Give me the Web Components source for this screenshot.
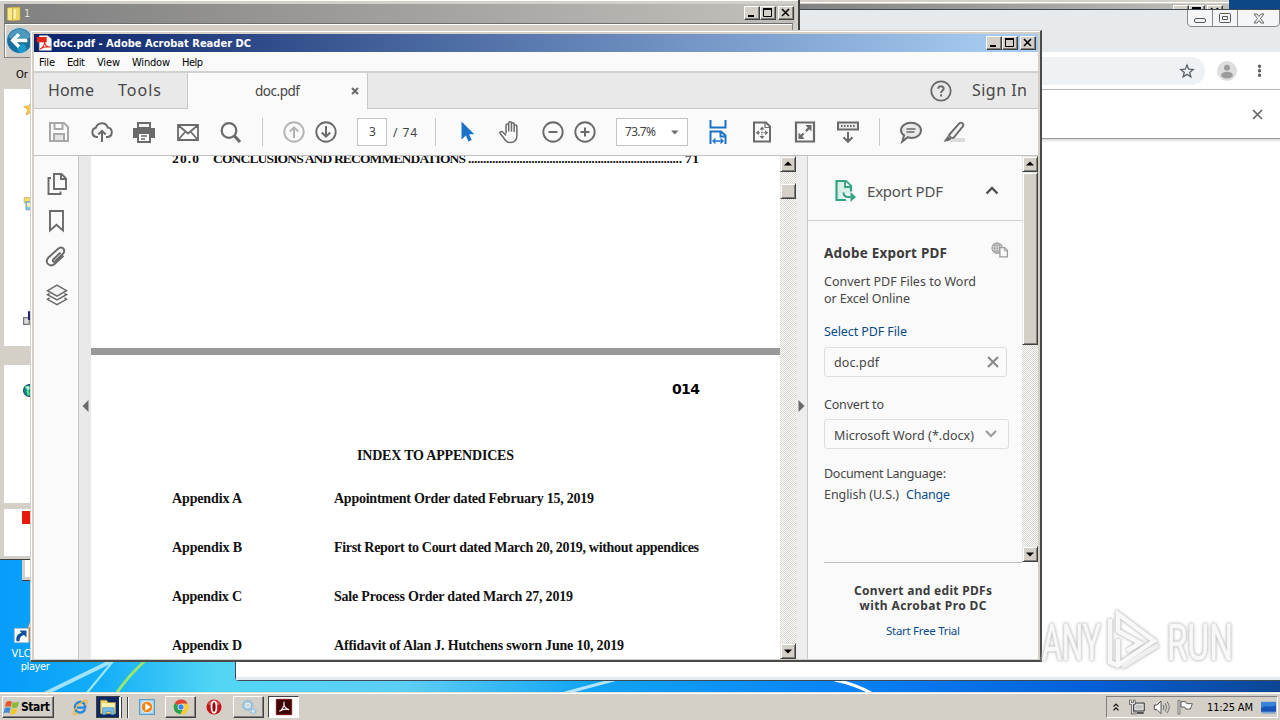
<!DOCTYPE html>
<html lang="en">
<head>
<meta charset="UTF-8">
<title>doc.pdf - Adobe Acrobat Reader DC</title>
<style>
  body {
    margin: 0;
    overflow: hidden;
    font-family: "Noto Sans", "Open Sans", sans-serif;
  }
</style>
</head>
<body>
<desktop-screen></desktop-screen>

<script>
const ICONS = {
  save: `<path d="M3 3h14l4 4v14H3z M7.500 3v6h8V3 M7 21v-7h10v7" fill="none" stroke="#a8a8a8" stroke-width="2"/><path d="M8 15h8v5H8z" fill="#e4e4e4"/>`,
  cloud: `<path d="M8 17H6.500a4.700 4.700 0 0 1-.6-9.200A6.200 6.200 0 0 1 17.800 7.500 4.800 4.800 0 0 1 17.500 17H16 M12 22V11 M8.300 14.500L12 10.800l3.700 3.700" fill="none" stroke="#6a6a6a" stroke-width="2"/>`,
  print: `<path d="M5 2h14v6H5z" fill="#6a6a6a"/><path d="M7 4h10v3H7z" fill="#f4f4f4"/><path d="M1 8h22v10H1z" fill="#6a6a6a"/><path d="M6 13h12v9H6z" fill="#fafafa" stroke="#6a6a6a" stroke-width="2"/><path d="M9 16h6M9 19h4" stroke="#6a6a6a" stroke-width="1.300"/>`,
  mail: `<path d="M2 5h20v15H2z M2.500 5.500L12 13.500l9.500-8 M2.500 19.500l7-8 M21.500 19.500l-7-8" fill="none" stroke="#6a6a6a" stroke-width="1.800"/>`,
  search: `<circle cx="10" cy="10.500" r="7.300" fill="none" stroke="#6a6a6a" stroke-width="2.200"/><path d="M15.500 16l5.500 6" stroke="#6a6a6a" stroke-width="3.200"/>`,
  up: `<circle cx="12" cy="12" r="9.700" fill="none" stroke="#b4b4b4" stroke-width="1.900"/><path d="M12 18V7.500M7.800 11.500L12 7.300l4.200 4.200" fill="none" stroke="#b4b4b4" stroke-width="2"/>`,
  down: `<circle cx="12" cy="12" r="9.700" fill="none" stroke="#6a6a6a" stroke-width="1.900"/><path d="M12 6v10.500M7.800 12.500l4.200 4.200 4.200-4.200" fill="none" stroke="#6a6a6a" stroke-width="2"/>`,
  cursor: `<path d="M6.500 1.500v18l4.300-4 2.700 6 3.200-1.400-2.600-5.800h5.200z" fill="#1a73c8"/>`,
  hand: `<path d="M8 13.500V5.500c0-2 2.700-2 2.700 0V11V3.300c0-2 2.800-2 2.800 0V11V4.300c0-2 2.700-2 2.700 0v7.200V6.500c0-2 2.700-2 2.700 0v8.700c0 5-2.400 7.300-6.400 7.300-3.500 0-5-1.500-6.500-4.200L2 13.200c-.6-1.400 1.300-2.400 2.700-1.200L8 15.500" fill="none" stroke="#6a6a6a" stroke-width="1.500" stroke-linejoin="round"/>`,
  minus: `<circle cx="12" cy="12" r="9.700" fill="none" stroke="#6a6a6a" stroke-width="1.900"/><path d="M7.500 12h9" stroke="#6a6a6a" stroke-width="2"/>`,
  plus: `<circle cx="12" cy="12" r="9.700" fill="none" stroke="#6a6a6a" stroke-width="1.900"/><path d="M7.500 12h9M12 7.500v9" stroke="#6a6a6a" stroke-width="2"/>`,
  fitwidth: `<path d="M4.500 0v7.500h15V0" fill="none" stroke="#1a73c8" stroke-width="2"/><path d="M4.500 24V11.500H15l4.500 4V24M14.500 11.500v5h5" fill="none" stroke="#1a73c8" stroke-width="2"/><path d="M7.500 21h9M9.500 18.500L7 21l2.500 2.500M14.500 18.500L17 21l-2.500 2.500" fill="none" stroke="#1a73c8" stroke-width="1.300"/>`,
  fitpage: `<path d="M4 2.500h12l4 4V21.500H4z" fill="none" stroke="#6a6a6a" stroke-width="2"/><path d="M15 3v4.500h5" fill="none" stroke="#6a6a6a" stroke-width="1.200"/><path d="M12 6.500l2.500 3h-5zM12 19l2.500-3h-5zM5.800 12.700l3-2.500v5zM18.200 12.700l-3-2.500v5z" fill="#6a6a6a"/><path d="M12 9v7.500M8.500 12.700h7" stroke="#6a6a6a" stroke-dasharray="1.500 1"/>`,
  fullscreen: `<path d="M3 2.500h18v19H3z" fill="none" stroke="#6a6a6a" stroke-width="2.200"/><path d="M18.500 5v6.500l-2.200-2.200-2.600 2.600-1.600-1.600 2.600-2.600L12.500 5zM5.500 19v-6.500l2.200 2.200 2-2 1.600 1.600-2 2 2.200 2.700z" fill="#6a6a6a"/>`,
  read: `<path d="M2 2.500h20v7H2z" fill="#e8e8e8" stroke="#6a6a6a" stroke-width="2"/><path d="M5 6h14" stroke="#6a6a6a" stroke-width="2" stroke-dasharray="1.600 1.400"/><path d="M12 12v9.500M7.500 17.300l4.500 4.500 4.500-4.500" fill="none" stroke="#6a6a6a" stroke-width="2"/>`,
  comment: `<path d="M12 2.800c5.800 0 10 3.200 10 7.600s-4.200 7.500-9 7.500c-2 0-3.200-.3-4.200-.7L3.300 21.500l1.800-6.200C3 13.900 2 12.500 2 10.400c0-4.400 4.200-7.600 10-7.600z" fill="#e8e8e8" stroke="#6a6a6a" stroke-width="2"/><path d="M7.500 9h9M7.500 12h8" stroke="#6a6a6a" stroke-width="1.300"/>`,
  pen: `<path d="M11 18h12v4H7z" fill="#dcdcdc"/><path d="M7 15L17.500 3.200c1.300-1.400 4.500.2 3.800 2.700L11.500 17.800c-2 .4-4-.8-4.500-2.800z" fill="#f4f4f4" stroke="#6a6a6a" stroke-width="1.900"/><path d="M6 15.500c.5 1.800 2.500 3.200 4.500 3L6.500 21l-5 .8z" fill="#6a6a6a"/>`,
  help: `<circle cx="12" cy="12" r="9.700" fill="none" stroke="#6a6a6a" stroke-width="1.800"/><path d="M9.300 9.800c0-3.300 5.400-3.200 5.400-.2 0 2-2.600 2-2.600 4.300M12.100 15.200v2.200" fill="none" stroke="#6a6a6a" stroke-width="2"/>`,
  pages: `<path d="M9 2h7.500l4.500 4.500V17H9z M16 2v5h5 M6 6H3.500v16h12v-2.500" fill="none" stroke="#6a6a6a" stroke-width="1.900"/>`,
  bookmark: `<path d="M5 2h13v19.500l-6.500-5.700L5 21.500z" fill="none" stroke="#6a6a6a" stroke-width="1.900"/>`,
  clip: `<path d="M16.500 8.500l-7 6.700c-1.800 1.600 0 3.400 1.600 2l8-7.700c3.400-3.600-1.400-8-5-4.800L4.500 13.500c-4.600 5 1.600 10.600 6.300 6.200l8.700-8" transform="translate(0 -1)" fill="none" stroke="#6a6a6a" stroke-width="1.900"/>`,
  layers: `<path d="M12 2.200l9.500 5.500L12 13.200 2.500 7.700z" fill="#f4f4f4" stroke="#6a6a6a" stroke-width="1.500"/><path d="M4.500 10.500l-2 1.200 9.500 5.200 9.500-5.200-2-1.200M4.500 15l-2 1.300 9.500 5.400 9.500-5.400-2-1.300" fill="none" stroke="#6a6a6a" stroke-width="1.500"/>`,
  export: `<path d="M13 21H3.500V2H13l5 5v5.500" fill="#d9efe6" stroke="#33a383" stroke-width="2.200"/><path d="M12 2v6h6" fill="#fff" stroke="#33a383" stroke-width="1.800"/><path d="M10.500 14c0 3 2 4 5 4h2" fill="none" stroke="#fafafa" stroke-width="5"/><path d="M10.500 13.500c0 3.500 2 4.500 5 4.500h2" fill="none" stroke="#33a383" stroke-width="2.200"/><path d="M17.500 13l5.500 5-5.500 5z" fill="#33a383"/>`,
  webfile: `<circle cx="9" cy="9" r="6.500" fill="#e4e4e4" stroke="#999" stroke-width="1.300"/><path d="M9 2.500v13M3 9h12M4 5.500h10M4 12.500h10" stroke="#999"/><ellipse cx="9" cy="9" rx="3.300" ry="6.500" fill="none" stroke="#999"/><path d="M12.500 8.500h6l3.500 3.500v8h-9.500z" fill="#fafafa" stroke="#999" stroke-width="1.600"/><path d="M18 9v3.500h4" fill="none" stroke="#999"/>`,
  pdf: `<path d="M5 1h13l5 5v17H5z" fill="#fff" stroke="#ccc"/><path d="M1 3h15v8H1z" fill="#e3261a"/><path d="M6 21c4-1 7-6 7-11 0 5 3 8 9 8-6-1-11 0-16 3z" fill="none" stroke="#e3261a" stroke-width="1.600"/>`,
  folder: `<path d="M2 3l8-1v20l-8-1z" fill="#f7e98a" stroke="#c5a940"/><path d="M10 2h11v19l-11 1z" fill="#edd763" stroke="#c5a940"/><path d="M13 5v14" stroke="#fff6bc" stroke-width="3"/>`,
  back: `<circle cx="12" cy="12" r="11.500" fill="#1a6f9e" stroke="#c3d4dc"/><path d="M2 9a10.500 10.500 0 0 1 20 0c-6 3-14 3-20 0z" fill="#5aa3c4" opacity=".8"/><circle cx="14" cy="19" r="4" fill="#1fb8e8" opacity=".6"/><path d="M19 12H6M11.500 6.500L6 12l5.500 5.500" fill="none" stroke="#fff" stroke-width="3"/>`,
  star: `<path d="M12 2l3 7 8 .6-6 5 2 7.900-7-4.300-7 4.300 2-7.900-6-5L9 9z" fill="#f9c84d" stroke="#d99a2b"/>`,
  staroutline: `<path d="M12 3l2.500 6.300 6.800.5-5.200 4.300 1.700 6.600-5.800-3.700-5.800 3.700 1.700-6.600-5.200-4.300 6.800-.5z" fill="none" stroke="#5f6368" stroke-width="2"/>`,
  user: `<circle cx="12" cy="12" r="12" fill="#dedede"/><circle cx="12" cy="8" r="3.600" fill="#9c9c9c"/><ellipse cx="12" cy="17" rx="7" ry="4" fill="#9c9c9c"/>`,
  library: `<path d="M2 1h20v9H2z" fill="#f0dd70" stroke="#b09b35"/><path d="M5 8h19v14H5z" fill="#7ec4ea" stroke="#4b87aa"/><path d="M7 10h8v7H7z" fill="#fff3a5"/>`,
  host: `<path d="M1 12h9v11H1z" fill="#ddd" stroke="#777" stroke-width="2"/><path d="M8 2h16v14H8z" fill="#26266e"/>`,
  globe: `<circle cx="12" cy="12" r="11" fill="#0c8c90" stroke="#0b4a68" stroke-width="2"/><path d="M4 7c6-5 8 2 5 5s5 6-1 8" fill="none" stroke="#62dd7c" stroke-width="4"/><circle cx="9" cy="7" r="3" fill="#d4fbe8"/>`,
  cone: `<path d="M11 2L2 25h22V2z" fill="#c77b3a"/><path d="M9 8l15 0v5H7z" fill="#e7ddce"/>`,
  shortcut: `<path d="M.5.500h23v23H.5z" fill="#fff" stroke="#9ab"/><path d="M4 21c-1-7 1-12 8-13L9 4h11v11l-4-4c-6 2-7 5-7 10z" fill="#12529c"/>`,
  winlogo: `<path d="M3 5c3-2.500 6-2.500 9-1l-2 8c-3-1.400-6-1.400-8.500.8z" fill="#e8552a"/><path d="M13.200 4.500c3 1.500 6 1 9.300-.8l-2 8.300c-3 1.700-6 2-9.300.5z" fill="#85bd38"/><path d="M1.200 14c3-2 6-2 8.700-.6l-2 8c-3-1.500-6-1.500-9 .6z" fill="#3b8ede"/><path d="M11 14c3 1.400 6.300 1 9.200-.6l-2 8c-3 1.700-6 2-9.200.6z" fill="#f7c52d"/>`,
  ie: `<path d="M19.500 15.500c-1.500 3.500-4 5-7.200 5-4.700 0-8-3.500-8-8s3.500-8 8-8c5 0 7.800 3.500 7.500 8.500H7.500" fill="none" stroke="#2487dc" stroke-width="3.600"/><path d="M3 20.500C-.5 25 5 23.500 9 20.500M2.500 20C4 13 13 4 20 2c5-1 2 5 0 7" fill="none" stroke="#efb52c" stroke-width="1.800"/>`,
  files: `<path d="M2 3h8l2 3h10v15H2z" fill="#f0d768" stroke="#a8923c"/><path d="M4 7h17v9H4z" fill="#fdf4b2"/><path d="M5 13h15v9h-4v-4H9v4H5z" fill="#78bce8" stroke="#4690c4"/>`,
  wmp: `<path d="M1 1h22v22H1z" fill="#b9dcf5" stroke="#5a9fd0" stroke-width="2"/><circle cx="12" cy="12" r="8.500" fill="#ef8414" stroke="#fff"/><path d="M9.500 6.500v11l8-5.500z" fill="#fff"/>`,
  chrome: `<path d="M12 12L2.500 6.500A11 11 0 0 1 22 7H12z" fill="#e14434"/><path d="M12 12L2.500 6.500A11 11 0 0 0 11 23l5-8.500z" fill="#2ba24c"/><path d="M12 7h10a11 11 0 0 1-11 16l5.300-9z" fill="#f9cb2e"/><circle cx="12" cy="12" r="5" fill="#fff"/><circle cx="12" cy="12" r="4" fill="#3f83ea"/>`,
  opera: `<circle cx="12" cy="12" r="11.300" fill="#c81218"/><path d="M3 8a10 10 0 0 1 18 0c-5 2-13 2-18 0z" fill="#ee7a72" opacity=".7"/><ellipse cx="12" cy="12" rx="3.700" ry="8.600" fill="#8c0a0e" stroke="#fff" stroke-width="2.600"/>`,
  gears: `<circle cx="10" cy="9.500" r="6" fill="#d8ecf8" stroke="#93bedb" stroke-width="2.500"/><circle cx="10" cy="9.500" r="8" fill="none" stroke="#93bedb" stroke-width="2" stroke-dasharray="2.500 2.500"/><circle cx="10" cy="9.500" r="2.500" fill="#d4d0c8"/><circle cx="18.500" cy="18.500" r="3.500" fill="#d8ecf8" stroke="#93bedb" stroke-width="2.500" stroke-dasharray="2.500 1"/>`,
  acrobat: `<path d="M.5.500h23v23H.5z" fill="#3d0505" stroke="#7d1414" stroke-width="1.500"/><path d="M5 18.500C9 17 13 10 12 5.500c-1.200 3 1 9 7.500 10.500-5-1.500-10-.5-14.500 2.500z" fill="none" stroke="#fff" stroke-width="1.700"/>`,
  network: `<path d="M7 6h16v12H7z" fill="#a6a6a6" stroke="#444" stroke-width="1.500"/><path d="M9 8h12v8H9z" fill="#c4c4c4" stroke="#fff"/><path d="M9 21h13" stroke="#555" stroke-width="3"/><path d="M2 1v6h6V1M5 7v14h7" fill="none" stroke="#444" stroke-width="3.500"/><path d="M2 2v5h6V2M5 7v14h7" fill="none" stroke="#fff" stroke-width="1.500"/>`,
  volume: `<path d="M2 9h4l6-6v19l-6-6H2z" fill="#fff" stroke="#555" stroke-width="1.500"/><path d="M15 9c1.500 2 1.500 5 0 7M18 6.500c3 4 3 8 0 12M21 4c4.500 5 4.500 12 0 17" fill="none" stroke="#777" stroke-width="1.600"/>`,
  flag: `<path d="M3 2v21" stroke="#555" stroke-width="4"/><path d="M3 3v19" stroke="#fff" stroke-width="1.500"/><path d="M6 4h7l1.500 3H23l-3 8h-7l-1.500-3H6z" fill="#fff" stroke="#555" stroke-width="1.400"/>`,
  chevrons: `<path d="M6 11l6-6 6 6M6 20l6-6 6 6" fill="none" stroke="#111" stroke-width="3"/>`,
  desktop: `<path d="M0 3h24v16H0z" fill="#1756b8"/><path d="M0 3h24v5C14 14 8 6 0 13z" fill="#3a83da"/><path d="M1 19h22v3H1z" fill="#85a6cf"/>`
};

// square svg icon, drawn on a 24px grid
customElements.define('ui-icon', class extends HTMLElement {
  constructor() {
    super();
    this.attachShadow({ mode: 'open' });
  }
  connectedCallback() {
    const size = this.getAttribute('size') || 24;
    this.shadowRoot.innerHTML = `
      <style>
        :host { display: block; flex: none; width: ${size}px; height: ${size}px; }
        svg { display: block; overflow: visible; }
      </style>
      <svg width="${size}" height="${size}" viewBox="0 0 24 24">${ICONS[this.getAttribute('name')]}</svg>
    `;
  }
});

function component(name, html) {
  const template = document.createElement('template');
  template.innerHTML = html;
  customElements.define(name, class extends HTMLElement {
    constructor() {
      super();
      this.attachShadow({ mode: 'open' }).appendChild(template.content.cloneNode(true));
    }
  });
}

component('caption-buttons', `
  <style>
    :host { display: flex; flex: none; }
    svg {
      display: block;
      width: 12px;
      height: 10px;
      padding: 1px;
      background: #d4d0c8;
      border: 1px solid;
      border-color: #fff #404040 #404040 #fff;
      box-shadow: inset -1px -1px #808080;
    }
    svg:last-child { margin-left: 2px; }
  </style>
  <svg viewBox="0 0 12 10"><path d="M2 8h6" stroke="#000" stroke-width="2"/></svg>
  <svg viewBox="0 0 12 10"><path d="M1.500 1v7.500h8V1" fill="none" stroke="#000"/><path d="M1 1h9" stroke="#000" stroke-width="2"/></svg>
  <svg viewBox="0 0 12 10"><path d="M2 1l7 7M9 1L2 8" stroke="#000" stroke-width="1.600"/></svg>
`);

customElements.define('classic-scrollbar', class extends HTMLElement {
  constructor() {
    super();
    this.attachShadow({ mode: 'open' });
    this.shadowRoot.innerHTML = `
      <style>
        :host {
          display: flex;
          flex-direction: column;
          flex: none;
          width: 16px;
          background: repeating-conic-gradient(#fff 0 25%, #d8d4cd 0 50%) 0 0 / 2px 2px;
        }
        div {
          box-sizing: border-box;
          flex: none;
          height: 16px;
          background: #d4d0c8;
          border: 1px solid;
          border-color: #e8e6e0 #404040 #404040 #e8e6e0;
          box-shadow: inset 1px 1px #fff, inset -1px -1px #808080;
        }
        .down { margin-top: auto; }
        svg { display: block; width: 14px; height: 14px; }
      </style>
      <div><svg><path d="M3 8.500h8L7 4.500z"/></svg></div>
      <div class="thumb"></div>
      <div class="down"><svg><path d="M3 5.500h8L7 9.500z"/></svg></div>
    `;
  }
  connectedCallback() {
    const thumb = this.shadowRoot.querySelector('.thumb');
    thumb.style.marginTop = this.getAttribute('offset') + 'px';
    thumb.style.height = this.getAttribute('length') + 'px';
  }
});

component('explorer-window', `
  <style>
    :host {
      display: flex;
      flex-direction: column;
      box-sizing: border-box;
      background: #d4d0c8;
      border-right: 2px solid #404040;
      border-bottom: 1px solid #404040;
      box-shadow: inset 0 1px #fff;
      padding: 4px 3px 3px 4px;
      font: 11px "DejaVu Sans Condensed", "Noto Sans", sans-serif;
    }
    header {
      display: flex;
      align-items: center;
      height: 19px;
      background: linear-gradient(90deg, #808080, #c3c0bb);
      color: #e4e0d8;
      padding: 0 1px 0 2px;
      gap: 2px;
    }
    caption-buttons { margin: -1px 0 0 auto; }
    .nav {
      height: 33px;
      border: 1px solid #808080;
      border-top-color: #6e6e6e;
      box-shadow: inset 1px 1px #fff;
      display: flex;
      align-items: center;
      padding-left: 1px;
      margin-right: 2px;
    }
    .bar { height: 31px; line-height: 33px; padding-left: 12px; }
    .list { flex: 1; background: #fff; display: flex; flex-direction: column; align-items: flex-start; }
    .list ui-icon { margin-left: 19px; }
    .row { width: 100%; height: 19px; background: #d4d0c8; margin-top: 21px; }
    .split { width: 100%; height: 6px; background: #d4d0c8; margin-top: 106px; }
    .pdf { width: 14px; height: 13px; background: #e6190a; margin: 2px 0 0 18px; }
  </style>
  <header><ui-icon name="folder" size="16"></ui-icon><span>1</span><caption-buttons></caption-buttons></header>
  <div class="nav"><ui-icon name="back" size="27"></ui-icon></div>
  <div class="bar">Or</div>
  <div class="list">
    <ui-icon name="star" size="16" style="margin-top: 11px"></ui-icon>
    <ui-icon name="library" size="14" style="margin-top: 81px"></ui-icon>
    <ui-icon name="host" size="15" style="margin-top: 99px"></ui-icon>
    <div class="row"></div>
    <ui-icon name="globe" size="13" style="margin-top: 19px"></ui-icon>
    <div class="split"></div>
    <div class="pdf"></div>
  </div>
`);

component('browser-window', `
  <style>
    :host {
      display: flex;
      flex-direction: column;
      box-sizing: border-box;
      background: #fff;
      border: 1px solid #3d4a55;
      border-right: 0;
      border-bottom-left-radius: 4px;
    }
    .caption { height: 42px; background: #e6eaed; display: flex; justify-content: flex-end; align-items: flex-start; }
    .caption svg { display: block; margin-right: 1px; }
    .address { height: 37px; display: flex; align-items: center; border-bottom: 1px solid #b4b4b4; }
    .url {
      width: 969px;
      height: 28px;
      box-sizing: border-box;
      border-radius: 0 14px 14px 0;
      background: #eef2f5;
      display: flex;
      align-items: center;
      justify-content: flex-end;
      padding-right: 10px;
    }
    .address > ui-icon { margin-left: 12px; }
    .menu { width: 3px; height: 13px; margin-left: 21px; background: radial-gradient(circle, #5f6368 1.600px, transparent 2px) 0 0 / 3px 4.500px; }
    .info {
      height: 48px;
      border-bottom: 1px solid #9c9c9c;
      box-shadow: 0 1px 3px #c4c4c4;
      display: flex;
      align-items: center;
      justify-content: flex-end;
      padding-right: 18px;
    }
    .foot { height: 3px; margin-top: auto; background: #e6eaed; }
  </style>
  <div class="caption">
    <svg width="93" height="17" viewBox="0 0 93 17" fill="#f4f6f7" stroke="#86898c">
      <path d="M.5 0v12q0 4.500 4.500 4.500h83q4.500 0 4.500-4.500V0M25.500 0v16M50.500 0v16"/>
      <rect x="7.500" y="8.500" width="11" height="4" rx="1.500" stroke="#555"/>
      <rect x="32.500" y="3.500" width="11" height="9" rx="1" stroke="#555"/><path d="M35.500 6.500h5v3h-5z" stroke="#555"/>
      <path d="M67 4h3l2 2.500L74 4h3l-3.500 4.500L77 13h-3l-2-2.500L70 13h-3l3.500-4.500z" stroke="#666"/>
    </svg>
  </div>
  <div class="address">
    <div class="url"><ui-icon name="staroutline" size="16"></ui-icon></div>
    <ui-icon name="user" size="20"></ui-icon>
    <div class="menu"></div>
  </div>
  <div class="info"><svg width="11" height="11"><path d="M1 1l9 9M10 1L1 10" stroke="#666" stroke-width="1.700"/></svg></div>
  <div class="foot"></div>
`);

component('tab-strip', `
  <style>
    :host {
      display: flex;
      flex: none;
      height: 35px;
      border-bottom: 1px solid #c8c8c8;
      border-top: 2px solid #d0d0cc;
      background: #e9e9e9;
      color: #464646;
      font-size: 16px;
      line-height: 35px;
    }
    .home { display: flex; width: 139px; padding-left: 14px; gap: 24px; }
    .tab {
      display: flex;
      align-items: center;
      width: 112px;
      height: 36px;
      padding-left: 67px;
      background: #fafafa;
      border: solid #c8c8c8;
      border-width: 0 1px;
      font-size: 13.500px;
    }
    .tab svg { margin-left: auto; margin-right: 8px; }
    .right { display: flex; align-items: center; margin-left: auto; padding-right: 11px; gap: 19px; }
  </style>
  <div class="home"><fit-text w="46">Home</fit-text><fit-text w="43">Tools</fit-text></div>
  <div class="tab">
    <fit-text w="45">doc.pdf</fit-text>
    <svg width="8" height="8"><path d="M1 1l6 6M7 1L1 7" stroke="#6a6a6a" stroke-width="2"/></svg>
  </div>
  <div class="right"><ui-icon name="help" size="24"></ui-icon><fit-text w="55">Sign In</fit-text></div>
`);

component('tool-bar', `
  <style>
    :host {
      display: flex;
      flex: none;
      align-items: center;
      gap: 19px;
      height: 46px;
      padding-left: 13px;
      border-bottom: 1px solid #c0c0c0;
      background: #fafafa;
      color: #444;
      font-size: 12px;
    }
    .sep { width: 1px; height: 28px; background: #c8c8c8; }
    .tight { margin-left: -11px; }
    .box { box-sizing: border-box; height: 28px; line-height: 26px; border: 1px solid #c4c4c4; background: #fff; }
    .page { width: 30px; padding-left: 11px; }
    .zoom { width: 72px; padding: 0 8px; display: flex; align-items: center; justify-content: space-between; }
  </style>
  <ui-icon name="save"></ui-icon>
  <ui-icon name="cloud"></ui-icon>
  <ui-icon name="print" style="margin-left: -1px"></ui-icon>
  <ui-icon name="mail" style="margin-left: 1px"></ui-icon>
  <ui-icon name="search"></ui-icon>
  <div class="sep"></div>
  <ui-icon name="up"></ui-icon>
  <ui-icon name="down" class="tight"></ui-icon>
  <div class="box page">3</div>
  <fit-text w="24" style="margin-left: -13px">/ 74</fit-text>
  <div class="sep" style="margin-left: -1px"></div>
  <ui-icon name="cursor"></ui-icon>
  <ui-icon name="hand"></ui-icon>
  <ui-icon name="minus"></ui-icon>
  <ui-icon name="plus" class="tight"></ui-icon>
  <div class="box zoom">
    <fit-text w="31">73.7%</fit-text>
    <svg width="8" height="5"><path d="M0 .5h7.500L3.800 4.500z" fill="#6a6a6a"/></svg>
  </div>
  <ui-icon name="fitwidth" style="margin-left: -1px"></ui-icon>
  <ui-icon name="fitpage" style="margin-left: 1px"></ui-icon>
  <ui-icon name="fullscreen"></ui-icon>
  <ui-icon name="read"></ui-icon>
  <div class="sep"></div>
  <ui-icon name="comment"></ui-icon>
  <ui-icon name="pen"></ui-icon>
`);

component('nav-rail', `
  <style>
    :host { display: flex; flex: none; background: #fafafa; }
    .icons { width: 45px; display: flex; flex-direction: column; padding: 16px 0 0 11px; box-sizing: border-box; border-right: 1px solid #c4c4c4; gap: 13px; }
    .strip { width: 12px; background: #e9e9e9; display: flex; align-items: center; justify-content: center; }
    .strip svg { margin-bottom: 3px; }
  </style>
  <div class="icons">
    <ui-icon name="pages"></ui-icon>
    <ui-icon name="bookmark"></ui-icon>
    <ui-icon name="clip" style="margin: -1px 0 0 -1px"></ui-icon>
    <ui-icon name="layers" style="margin-top: 1px"></ui-icon>
  </div>
  <div class="strip"><svg width="7" height="12"><path d="M6.500 0v12L.5 6z" fill="#6a6a6a"/></svg></div>
`);

component('appendix-row', `
  <style>
    :host { display: flex; height: 17px; line-height: 17px; margin-bottom: 32px; }
    .name { width: 162px; }
  </style>
  <div class="name"><slot name="name"></slot></div>
  <slot></slot>
`);

component('doc-view', `
  <style>
    :host {
      display: block;
      flex: 1;
      overflow: hidden;
      background: #fff;
      color: #111;
      font: bold 14px/17px "Liberation Serif", serif;
    }
    .toc { display: flex; height: 17px; margin: -6px 0 0 81px; }
    .toc fit-text { font-size: 13.500px; }
    .gap { height: 7px; background: #999; margin: 181px 0 26px; }
    .number { height: 17px; padding-left: 581px; font: bold 14px/17px "DejaVu Sans", sans-serif; color: #000; }
    h1 { font: inherit; margin: 49px 0 26px; padding-left: 266px; }
    .index { padding-left: 81px; }
  </style>
  <div class="toc">
    <fit-text w="27">20.0</fit-text>
    <fit-text w="253" style="margin-left: 14px">CONCLUSIONS AND RECOMMENDATIONS</fit-text>
    <fit-text w="214" style="margin-left: 2px">.......................................................................</fit-text>
    <fit-text w="14" style="margin-left: 3px">71</fit-text>
  </div>
  <div class="gap"></div>
  <div class="number"><fit-text w="28">014</fit-text></div>
  <h1><fit-text w="157">INDEX TO APPENDICES</fit-text></h1>
  <div class="index">
    <appendix-row><fit-text slot="name" w="70">Appendix A</fit-text><fit-text w="260">Appointment Order dated February 15, 2019</fit-text></appendix-row>
    <appendix-row><fit-text slot="name" w="70">Appendix B</fit-text><fit-text w="365">First Report to Court dated March 20, 2019, without appendices</fit-text></appendix-row>
    <appendix-row><fit-text slot="name" w="70">Appendix C</fit-text><fit-text w="239">Sale Process Order dated March 27, 2019</fit-text></appendix-row>
    <appendix-row><fit-text slot="name" w="70">Appendix D</fit-text><fit-text w="290">Affidavit of Alan J. Hutchens sworn June 10, 2019</fit-text></appendix-row>
  </div>
`);

component('export-panel', `
  <style>
    :host { display: flex; flex-direction: column; flex: none; width: 230px; background: #fafafa; color: #464646; font-size: 12.500px; border-left: 1px solid #c8c8c8; }
    .top { display: flex; height: 406px; }
    .main { width: 214px; }
    header { display: flex; align-items: center; height: 64px; padding: 0 23px 0 25px; border-bottom: 1px solid #d0d0d0; font-size: 15px; color: #505050; }
    header ui-icon { margin: 6px 10px 0 0; }
    header fit-text { margin-top: 5px; }
    header svg { margin: 5px 0 0 auto; }
    .body { padding: 22px 12px 0 16px; display: flex; flex-direction: column; align-items: flex-start; }
    .head { display: flex; width: 100%; justify-content: space-between; align-items: center; height: 20px; font-weight: bold; font-size: 13.500px; color: #3c3c3c; }
    .head ui-icon { margin: -5px 1px 0 0; }
    p { margin: 10px 0 16px; line-height: 17px; }
    p fit-text { display: block; }
    a { color: #0a4c8a; }
    .field { box-sizing: border-box; height: 30px; border: 1px solid #dedede; border-radius: 3px; display: flex; align-items: center; justify-content: space-between; padding: 0 7px 0 9px; }
    .line { height: 18px; line-height: 18px; }
    footer { display: flex; flex-direction: column; align-items: center; margin: 0 16px 0 16px; padding-top: 20px; border-top: 1px solid #c0c0c0; line-height: 15px; font-size: 12px; }
    footer fit-text { display: block; }
    footer b { color: #3c3c3c; display: flex; flex-direction: column; align-items: center; }
    footer a { margin-top: 10px; font-size: 11.500px; }
  </style>
  <div class="top">
    <div class="main">
      <header>
        <ui-icon name="export" size="24"></ui-icon>
        <fit-text w="76">Export PDF</fit-text>
        <svg width="14" height="9"><path d="M1.500 7.500L7 2l5.500 5.500" fill="none" stroke="#505050" stroke-width="2.400"/></svg>
      </header>
      <div class="body">
        <div class="head"><fit-text w="123">Adobe Export PDF</fit-text><ui-icon name="webfile" size="19"></ui-icon></div>
        <p><fit-text w="152">Convert PDF Files to Word</fit-text><fit-text w="86">or Excel Online</fit-text></p>
        <a class="line"><fit-text w="83">Select PDF File</fit-text></a>
        <div class="field" style="width: 183px; margin: 6px 0 19px">
          <fit-text w="45">doc.pdf</fit-text>
          <svg width="12" height="12"><path d="M1 1l10 10M11 1L1 11" stroke="#888" stroke-width="2"/></svg>
        </div>
        <div class="line"><fit-text w="60">Convert to</fit-text></div>
        <div class="field" style="width: 185px; margin: 5px 0 16px; padding-right: 11px">
          <fit-text w="140" style="margin-top: 2px">Microsoft Word (*.docx)</fit-text>
          <svg width="12" height="8"><path d="M1 1l5 5 5-5" fill="none" stroke="#999" stroke-width="2"/></svg>
        </div>
        <div class="line"><fit-text w="122">Document Language:</fit-text></div>
        <div class="line" style="margin-top: 3px"><fit-text w="75">English (U.S.)</fit-text><a style="margin-left: 7px"><fit-text w="44">Change</fit-text></a></div>
      </div>
    </div>
    <classic-scrollbar offset="0" length="173"></classic-scrollbar>
  </div>
  <footer>
    <b><fit-text w="138">Convert and edit PDFs</fit-text><fit-text w="127">with Acrobat Pro DC</fit-text></b>
    <a><fit-text w="74">Start Free Trial</fit-text></a>
  </footer>
`);

component('acrobat-window', `
  <style>
    :host {
      display: flex;
      flex-direction: column;
      box-sizing: border-box;
      background: #d4d0c8;
      border: 1px solid #d4d0c8;
      border-right: 2px solid #4a4a4a;
      border-bottom: 2px solid #4a4a4a;
      box-shadow: inset 1px 1px #fff;
      padding: 3px 2px 1px 3px;
    }
    .title {
      display: flex;
      flex: none;
      align-items: center;
      height: 18px;
      padding: 0 2px 0 2px;
      background: linear-gradient(90deg, #0a246a, #a6caf0 96%);
      color: #fff;
      font: bold 11px "DejaVu Sans Condensed", "Noto Sans", sans-serif;
    }
    .title ui-icon { margin-right: 1px; }
    caption-buttons { margin-left: auto; }
    .menu { display: flex; flex: none; height: 19px; line-height: 22px; padding-left: 5px; background: #fafafa; font-size: 11px; color: #000; gap: 12px; font-family: "DejaVu Sans Condensed", "Noto Sans", sans-serif; }
    .content { display: flex; flex: 1; min-height: 0; background: #fafafa; }
    .handle { width: 11px; background: #ededed; display: flex; align-items: center; justify-content: center; }
    .handle svg { margin-bottom: 3px; }
  </style>
  <div class="title">
    <ui-icon name="pdf" size="16"></ui-icon>
    <fit-text w="198">doc.pdf - Adobe Acrobat Reader DC</fit-text>
    <caption-buttons></caption-buttons>
  </div>
  <div class="menu">
    <fit-text w="16">File</fit-text><fit-text w="18">Edit</fit-text><fit-text w="23">View</fit-text><fit-text w="38">Window</fit-text><fit-text w="21">Help</fit-text>
  </div>
  <tab-strip></tab-strip>
  <tool-bar></tool-bar>
  <div class="content">
    <nav-rail></nav-rail>
    <doc-view></doc-view>
    <classic-scrollbar offset="11" length="16"></classic-scrollbar>
    <div class="handle"><svg width="7" height="12"><path d="M.5 0v12l6-6z" fill="#6a6a6a"/></svg></div>
    <export-panel></export-panel>
  </div>
`);

component('task-bar', `
  <style>
    :host {
      display: flex;
      box-sizing: border-box;
      align-items: center;
      background: #d4d0c8;
      box-shadow: inset 0 1px #e4e2dc, inset 0 2px #fff;
      padding: 3px 2px 1px;
      font-family: "DejaVu Sans Condensed", "Noto Sans", sans-serif;
    }
    .btn {
      box-sizing: border-box;
      width: 31px;
      height: 22px;
      display: flex;
      align-items: center;
      justify-content: center;
      border: 1px solid;
      border-color: #fff #404040 #404040 #fff;
      box-shadow: inset -1px -1px #808080;
    }
    .start { width: 52px; font-weight: bold; font-size: 12px; justify-content: flex-start; padding-left: 1px; gap: 1px; }
    .group { width: 24px; background: #0d2766; border: 1px solid #404040; margin-left: 8px; box-shadow: none; }
    .stack { width: 5px; height: 21px; border: solid #404040; border-width: 0 1px; box-shadow: -2px 0 #fff, 1px 0 #fff; margin-left: 1px; }
    .active { background: #fff; border-color: #404040 #fff #fff #404040; box-shadow: none; }
    .tray {
      box-sizing: border-box;
      height: 22px;
      width: 172px;
      margin-left: auto;
      border: 1px solid;
      border-color: #808080 #fff #fff #808080;
      display: flex;
      align-items: center;
      font-size: 11px;
      padding-left: 4px;
    }
  </style>
  <div class="btn start"><ui-icon name="winlogo" size="16"></ui-icon><fit-text w="29">Start</fit-text></div>
  <ui-icon name="ie" size="16" style="margin-left: 18px"></ui-icon>
  <div class="btn group"><ui-icon name="files" size="18"></ui-icon></div>
  <div class="stack"></div>
  <ui-icon name="wmp" size="16" style="margin-left: 11px"></ui-icon>
  <div class="btn" style="margin-left: 10px"><ui-icon name="chrome" size="16"></ui-icon></div>
  <ui-icon name="opera" size="16" style="margin-left: 10px"></ui-icon>
  <div class="btn" style="margin-left: 11px"><ui-icon name="gears" size="16"></ui-icon></div>
  <div class="btn active" style="margin-left: 4px"><ui-icon name="acrobat" size="16"></ui-icon></div>
  <div class="tray">
    <ui-icon name="chevrons" size="10"></ui-icon>
    <ui-icon name="network" size="16" style="margin-left: 8px"></ui-icon>
    <ui-icon name="volume" size="16" style="margin-left: 8px"></ui-icon>
    <ui-icon name="flag" size="16" style="margin-left: 8px"></ui-icon>
    <fit-text w="46" style="margin-left: 14px">11:25 AM</fit-text>
    <ui-icon name="desktop" size="15" style="margin-left: 8px"></ui-icon>
  </div>
`);

component('brand-mark', `
  <style>
    :host { display: block; }
    svg { display: block; overflow: visible; filter: drop-shadow(0 0 1.500px #bcbcbc) drop-shadow(0 0 1px #d4d4d4); }
    text { font: 50px "Roboto", sans-serif; fill: #f8f8f8; stroke: #f8f8f8; stroke-width: .6; }
  </style>
  <svg width="200" height="66">
    <text x="2" y="53" textLength="59" lengthAdjust="spacingAndGlyphs">ANY</text>
    <path d="M70 12v43l6 3M78 32v26l36-24L78 7v17l22 12-13 8" fill="none" stroke="#f8f8f8" stroke-width="4.500"/>
    <path d="M82 60l36-22" fill="none" stroke="#f0f0f0" stroke-width="4.500"/>
    <text x="127" y="53" textLength="66" lengthAdjust="spacingAndGlyphs">RUN</text>
  </svg>
`);

component('desktop-screen', `
  <style>
    :host {
      display: block;
      position: relative;
      width: 1280px;
      height: 720px;
      overflow: hidden;
      background: #0a8ae8;
    }
    .wallpaper { display: block; }
    .win, .label, brand-mark, task-bar { position: absolute; }
    .label { width: 70px; color: #fff; font: 11px/13px "DejaVu Sans Condensed", "Noto Sans", sans-serif; text-align: center; }
    .strip { background: linear-gradient(#d4d0c8 2px, #fff 2px 3px, #d4d0c8 3px 4px, transparent 4px), linear-gradient(90deg, #808080, #c3c0bb); box-sizing: border-box; overflow: hidden; }
    .strip caption-buttons { justify-content: flex-end; margin: 5px 6px 0 0; }
    .small { background: #fff; border: solid #d4d0c8; border-width: 0 0 3px 3px; box-shadow: 0 1px #404040; }
  </style>
  <svg class="wallpaper" width="1280" height="720">
    <defs>
      <linearGradient id="sky"><stop offset="0" stop-color="#069cfa"/><stop offset=".08" stop-color="#14aef8"/><stop offset=".17" stop-color="#52d6f4"/><stop offset=".32" stop-color="#5ccdf4"/><stop offset=".46" stop-color="#12a4f4"/><stop offset=".65" stop-color="#0a84f6"/><stop offset=".85" stop-color="#0560d8"/><stop offset="1" stop-color="#0d4694"/></linearGradient>
    </defs>
    <rect width="1280" height="720" fill="url(#sky)"/>
    <path d="M1229 0h51v10h-51z" fill="#0c4786"/>
    <path d="M40 696L114 660" stroke="#c4f2fc" stroke-width="4" opacity=".8"/>
    <path d="M86 694L114 660" stroke="#9ee8fb" stroke-width="2"/>
    <path d="M116 694Q128 676 146 660" fill="none" stroke="#9ae86a" stroke-width="3"/>
    <path d="M565 693l60-16" stroke="#b4e4ff" stroke-width="3"/>
    <path d="M835 680q20 4 38 14" fill="none" stroke="#fff" stroke-width="3"/>
  </svg>
  <div class="win strip" style="left: 790px; top: 0; width: 439px; height: 10px"><caption-buttons></caption-buttons></div>
  <browser-window class="win" style="left: 235px; top: 9px; width: 1046px; height: 672px"></browser-window>
  <div class="win small" style="left: 22px; top: 555px; width: 30px; height: 22px"></div>
  <ui-icon class="win" name="cone" size="28" style="left: 20px; top: 612px"></ui-icon>
  <ui-icon class="win" name="shortcut" size="15" style="left: 14px; top: 628px"></ui-icon>
  <div class="label" style="left: -14px; top: 647px">VLC</div>
  <div class="label" style="left: 0; top: 660px"><fit-text w="29">player</fit-text></div>
  <explorer-window class="win" style="left: 0; top: 0; width: 800px; height: 560px"></explorer-window>
  <acrobat-window class="win" style="left: 30px; top: 30px; width: 1012px; height: 632px"></acrobat-window>
  <brand-mark style="left: 1040px; top: 607px"></brand-mark>
  <task-bar style="left: 0; top: 692px; width: 1280px; height: 28px"></task-bar>
`);

// spreads its letters so that the text takes exactly w pixels
customElements.define('fit-text', class extends HTMLElement {
  constructor() {
    super();
    this.attachShadow({ mode: 'open' });
    this.shadowRoot.innerHTML = `<style>
      :host { display: inline-block; flex: none; }
      span { display: inline-block; white-space: pre; }
    </style><span><slot></slot></span>`;
  }
  connectedCallback() {
    const width = Number(this.getAttribute('w'));
    const span = this.shadowRoot.querySelector('span');
    const natural = span.getBoundingClientRect().width;
    span.style.letterSpacing = (width - natural) / (this.textContent.length - 1) + 'px';
    this.style.width = width + 'px';
  }
});
</script>
</body>
</html>
